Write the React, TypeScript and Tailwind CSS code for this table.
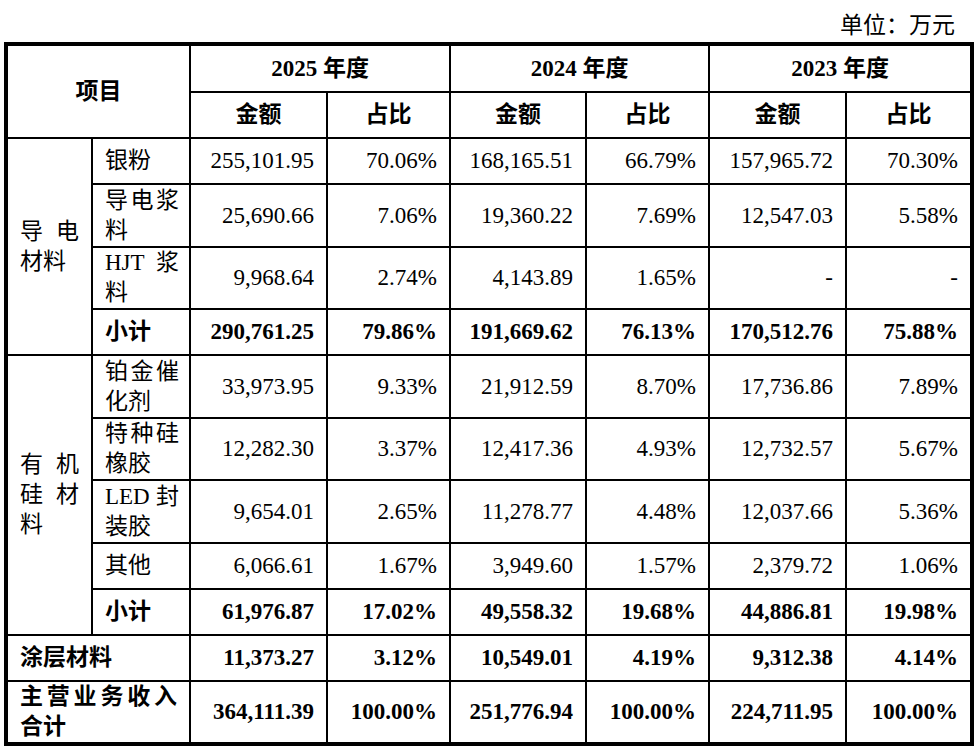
type Cell = { amount: string; pct: string };
type Line = { name: string; values: Cell[]; bold?: boolean; h: string };

const conductive: Line[] = [
  { name: "银粉", h: "h-[46px]", values: [{ amount: "255,101.95", pct: "70.06%" }, { amount: "168,165.51", pct: "66.79%" }, { amount: "157,965.72", pct: "70.30%" }] },
  { name: "导电浆料", h: "h-[63px]", values: [{ amount: "25,690.66", pct: "7.06%" }, { amount: "19,360.22", pct: "7.69%" }, { amount: "12,547.03", pct: "5.58%" }] },
  { name: "HJT 浆料", h: "h-[62px]", values: [{ amount: "9,968.64", pct: "2.74%" }, { amount: "4,143.89", pct: "1.65%" }, { amount: "-", pct: "-" }] },
  { name: "小计", h: "h-[46px]", bold: true, values: [{ amount: "290,761.25", pct: "79.86%" }, { amount: "191,669.62", pct: "76.13%" }, { amount: "170,512.76", pct: "75.88%" }] },
];

const silicone: Line[] = [
  { name: "铂金催化剂", h: "h-[63px]", values: [{ amount: "33,973.95", pct: "9.33%" }, { amount: "21,912.59", pct: "8.70%" }, { amount: "17,736.86", pct: "7.89%" }] },
  { name: "特种硅橡胶", h: "h-[62px]", values: [{ amount: "12,282.30", pct: "3.37%" }, { amount: "12,417.36", pct: "4.93%" }, { amount: "12,732.57", pct: "5.67%" }] },
  { name: "LED 封装胶", h: "h-[63px]", values: [{ amount: "9,654.01", pct: "2.65%" }, { amount: "11,278.77", pct: "4.48%" }, { amount: "12,037.66", pct: "5.36%" }] },
  { name: "其他", h: "h-[46px]", values: [{ amount: "6,066.61", pct: "1.67%" }, { amount: "3,949.60", pct: "1.57%" }, { amount: "2,379.72", pct: "1.06%" }] },
  { name: "小计", h: "h-[46px]", bold: true, values: [{ amount: "61,976.87", pct: "17.02%" }, { amount: "49,558.32", pct: "19.68%" }, { amount: "44,886.81", pct: "19.98%" }] },
];

const totals: Line[] = [
  { name: "涂层材料", h: "h-[46px]", bold: true, values: [{ amount: "11,373.27", pct: "3.12%" }, { amount: "10,549.01", pct: "4.19%" }, { amount: "9,312.38", pct: "4.14%" }] },
  { name: "主营业务收入合计", h: "h-[63px]", bold: true, values: [{ amount: "364,111.39", pct: "100.00%" }, { amount: "251,776.94", pct: "100.00%" }, { amount: "224,711.95", pct: "100.00%" }] },
];

const td = "border-2 border-black align-middle";
const num = `${td} pr-[12px] text-right`;
const label = `${td} pl-[12px] pr-[10px] text-justify`;

function Values({ line }: { line: Line }) {
  return (
    <>
      {line.values.map((v, i) => (
        <>
          <td key={`a${i}`} className={`${num} ${line.bold ? "font-bold" : ""}`}>{v.amount}</td>
          <td key={`p${i}`} className={`${num} ${line.bold ? "font-bold" : ""}`}>{v.pct}</td>
        </>
      ))}
    </>
  );
}

function Group({ title, lines }: { title: string; lines: Line[] }) {
  return (
    <>
      {lines.map((line, i) => (
        <tr key={line.name + i} className={line.h}>
          {i === 0 && (
            <td rowSpan={lines.length} className={`${td} pl-[12px] pr-[12px] text-justify`}>
              {title}
            </td>
          )}
          <td className={`${label} ${line.bold ? "font-bold" : ""}`}>{line.name}</td>
          <Values line={line} />
        </tr>
      ))}
    </>
  );
}

export default function App() {
  const years = ["2025 年度", "2024 年度", "2023 年度"];
  return (
    <div
      className="min-h-screen bg-white text-black text-[23px] leading-[30px]"
      style={{ fontFamily: '"Liberation Serif", "Noto Sans CJK SC", serif' }}
    >
      <div className="flex h-[42px] justify-end pr-[23px] pt-[11px]">单位：万元</div>
      <table className="ml-[4px] w-[966px] table-fixed border-collapse border-[4px] border-black">
        <colgroup>
          <col className="w-[86px]" />
          <col className="w-[98px]" />
          <col className="w-[137px]" />
          <col className="w-[123px]" />
          <col className="w-[136px]" />
          <col className="w-[123px]" />
          <col className="w-[137px]" />
          <col className="w-[126px]" />
        </colgroup>
        <thead>
          <tr className="h-[48px]">
            <th colSpan={2} rowSpan={2} className={`${td} text-center font-bold`}>项目</th>
            {years.map((y) => (
              <th key={y} colSpan={2} className={`${td} text-center font-bold`}>{y}</th>
            ))}
          </tr>
          <tr className="h-[46px]">
            {years.map((y) => (
              <>
                <th key={y + "a"} className={`${td} text-center font-bold`}>金额</th>
                <th key={y + "p"} className={`${td} text-center font-bold`}>占比</th>
              </>
            ))}
          </tr>
        </thead>
        <tbody>
          <Group title="导电材料" lines={conductive} />
          <Group title="有机硅材料" lines={silicone} />
          {totals.map((line) => (
            <tr key={line.name} className={line.h}>
              <td colSpan={2} className={`${td} pl-[12px] pr-[12px] text-justify font-bold`}>{line.name}</td>
              <Values line={line} />
            </tr>
          ))}
        </tbody>
      </table>
    </div>
  );
}
